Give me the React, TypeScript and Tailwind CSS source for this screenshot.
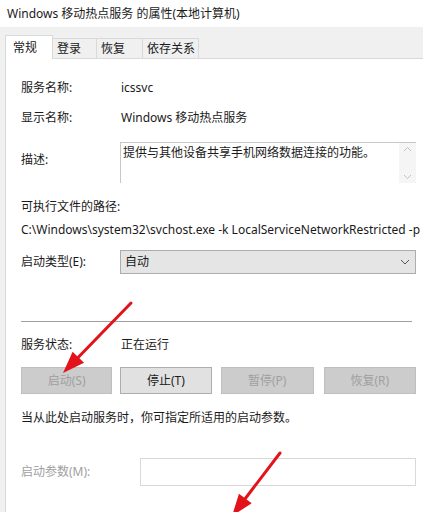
import React from 'react';

const cjk = { fontFamily: '"Noto Sans", "Noto Sans CJK SC", sans-serif' };

function Row({ label, value }: { label: string; value: string }) {
  return (
    <div className="flex items-center h-[30px]">
      <span className="w-[100px] shrink-0">{label}</span>
      <span>{value}</span>
    </div>
  );
}

function Arrow({ x1, y1, x2, y2 }: { x1: number; y1: number; x2: number; y2: number }) {
  const dx = x2 - x1;
  const dy = y2 - y1;
  const len = Math.hypot(dx, dy);
  const ux = dx / len;
  const uy = dy / len;
  const hl = 22;
  const hw = 8;
  const bx = x2 - ux * hl;
  const by = y2 - uy * hl;
  const pts = `${x2},${y2} ${bx - uy * hw},${by + ux * hw} ${bx + uy * hw},${by - ux * hw}`;
  return (
    <g>
      <line x1={x1} y1={y1} x2={bx} y2={by} stroke="#e3131b" strokeWidth={3} strokeLinecap="round" />
      <polygon points={pts} fill="#e3131b" />
    </g>
  );
}

export default function App() {
  return (
    <div className="relative w-[423px] h-[512px] overflow-hidden bg-[#f0f0f0] text-[12px] text-[#1a1a1a]" style={cjk}>
      {/* Title bar */}
      <div className="h-[27px] bg-white px-[7px] flex items-center text-[12px]">
        Windows 移动热点服务 的属性(本地计算机)
      </div>

      {/* Tabs */}
      <div className="flex items-end h-[31px] pl-[5px] pt-[8px]">
        <div className="h-[24px] w-[48px] bg-white border border-b-0 border-[#d9d9d9] flex items-center pl-[7px] -mb-px relative z-10">常规</div>
        <div className="h-[20px] w-[44px] bg-[#f0f0f0] border border-l-0 border-b-0 border-[#d9d9d9] flex items-center pl-[4px]">登录</div>
        <div className="h-[20px] w-[46px] bg-[#f0f0f0] border border-l-0 border-b-0 border-[#d9d9d9] flex items-center pl-[4px]">恢复</div>
        <div className="h-[20px] w-[56px] bg-[#f0f0f0] border border-l-0 border-b-0 border-[#d9d9d9] flex items-center pl-[4px]">依存关系</div>
      </div>

      {/* Panel */}
      <div className="ml-[5px] bg-white border-l border-t border-[#d9d9d9] h-[460px] pl-[15px] pr-[7px] pt-[14px]">
        <Row label="服务名称:" value="icssvc" />
        <Row label="显示名称:" value="Windows 移动热点服务" />

        <div className="flex mt-[9px] h-[41px]">
          <span className="w-[99px] shrink-0 pt-[9px]">描述:</span>
          <div className="flex-1 border-l border-t border-[#c8c8c8] bg-white flex">
            <div className="flex-1 pl-[2px] pt-[1px]">提供与其他设备共享手机网络数据连接的功能。</div>
            <div className="w-[17px] bg-[#f5f5f5] flex flex-col justify-between items-center py-[3px] text-[#b0b0b0]">
              <svg width="9" height="6" viewBox="0 0 9 6"><path d="M1 5 L4.5 1.5 L8 5" fill="none" stroke="#c0c0c0" strokeWidth="1" /></svg>
              <svg width="9" height="6" viewBox="0 0 9 6"><path d="M1 1 L4.5 4.5 L8 1" fill="none" stroke="#c0c0c0" strokeWidth="1" /></svg>
            </div>
          </div>
        </div>

        <div className="mt-[15px] leading-[18px]">可执行文件的路径:</div>
        <div className="mt-[5px] leading-[18px] whitespace-nowrap">C:\Windows\system32\svchost.exe -k LocalServiceNetworkRestricted -p</div>

        <div className="flex items-center mt-[11px]">
          <span className="w-[99px] shrink-0">启动类型(E):</span>
          <div className="flex-1 h-[24px] bg-[#e5e5e5] border border-[#adadad] flex items-center justify-between pl-[4px] pr-[5px]">
            <span>自动</span>
            <svg width="10" height="6" viewBox="0 0 10 6"><path d="M1 1 L5 5 L9 1" fill="none" stroke="#555" strokeWidth="1" /></svg>
          </div>
        </div>

        <div className="mt-[47px] border-t border-[#a0a0a0] mr-[4px]" />

        <div className="flex items-center h-[18px] mt-[14px]">
          <span className="w-[100px] shrink-0">服务状态:</span>
          <span>正在运行</span>
        </div>

        <div className="flex mt-[13px] gap-[8px] h-[27px]">
          <div className="w-[92px] bg-[#cccccc] border border-[#bfbfbf] flex items-center justify-center text-[#a0a0a0]">启动(S)</div>
          <div className="w-[92px] bg-[#e1e1e1] border border-[#adadad] flex items-center justify-center">停止(T)</div>
          <div className="w-[94px] bg-[#cccccc] border border-[#bfbfbf] flex items-center justify-center text-[#a0a0a0] ml-[1px]">暂停(P)</div>
          <div className="w-[93px] bg-[#cccccc] border border-[#bfbfbf] flex items-center justify-center text-[#a0a0a0] ml-[2px]">恢复(R)</div>
        </div>

        <div className="mt-[15px] leading-[18px]">当从此处启动服务时，你可指定所适用的启动参数。</div>

        <div className="flex items-center mt-[31px]">
          <span className="w-[119px] shrink-0 text-[#a0a0a0]">启动参数(M):</span>
          <div className="flex-1 h-[28px] border border-[#d9d9d9] bg-white" />
        </div>
      </div>

      {/* Annotation arrows */}
      <svg className="absolute left-0 top-0 pointer-events-none" width="423" height="512" viewBox="0 0 423 512">
        <Arrow x1={131} y1={303} x2={63} y2={373} />
        <Arrow x1={280} y1={453} x2={232} y2={516} />
      </svg>
    </div>
  );
}
